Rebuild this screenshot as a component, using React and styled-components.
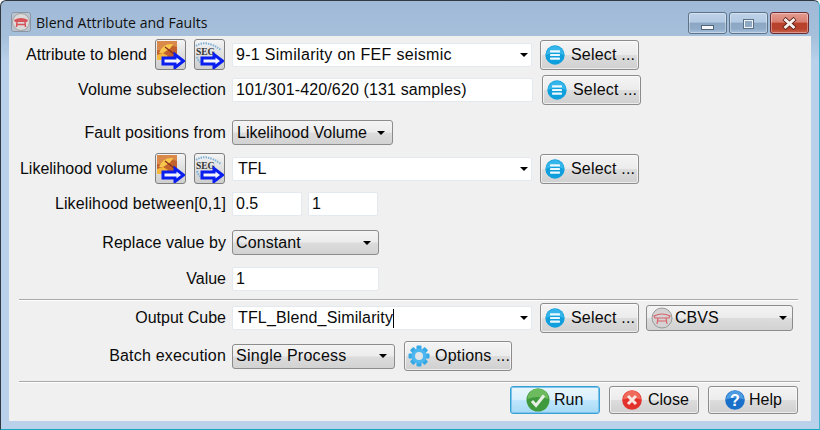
import React from 'react';
import styled, { createGlobalStyle } from 'styled-components';

const Global = createGlobalStyle`
  html, body { margin: 0; padding: 0; background: #fff; }
  body { font-family: "Liberation Sans", Arial, sans-serif; color: #000; }
`;

const Frame = styled.div`
  box-sizing: border-box;
  width: 820px;
  height: 430px;
  display: flex;
  flex-direction: column;
  background: linear-gradient(180deg, #9fb9d6 0, #a6c0dc 36px, #b9d1ea 60px, #b9d1ea 100%);
  border: 1px solid #2f3a40;
  border-bottom-color: #16a6c0;
  border-right-color: #3fb6d0;
  border-radius: 6px 6px 0 0;
  padding: 0 8px 8px;
`;

const TitleBar = styled.div`
  height: 35px;
  flex: none;
  display: flex;
  align-items: flex-start;
  padding-right: 2px;
`;

const AppIconBox = styled.div`
  width: 20px;
  height: 20px;
  margin: 11px 5px 0 2px;
`;

const Title = styled.div`
  font-family: "Open Sans", sans-serif;
  font-size: 14.1px;
  line-height: 20px;
  margin-top: 12px;
  color: #111;
  flex: 1;
`;

const WindowButton = styled.div`
  box-sizing: border-box;
  width: 39px;
  height: 22px;
  margin: 11px 0 0 ${p => p.$ml}px;
  border: 1px solid ${p => (p.$close ? '#6d2c34' : '#5d7389')};
  border-radius: 3px;
  box-shadow: inset 0 0 0 1px rgba(255, 255, 255, 0.35);
  background: ${p => (p.$close
    ? 'linear-gradient(180deg, #e39c8f 0, #d87e70 46%, #b8412a 50%, #b8432c 80%, #c9644f 100%)'
    : 'linear-gradient(180deg, #bed2e8 0, #b3cae3 46%, #8ba7c4 50%, #8fabc8 80%, #a9c3de 100%)')};
  display: flex;
  align-items: center;
  justify-content: center;
`;

const MinGlyph = styled.div`
  width: 13px;
  height: 5px;
  margin-top: 8px;
  background: #f4f6f8;
  border: 1px solid #50647a;
  box-sizing: border-box;
`;

const MaxGlyph = styled.div`
  width: 11px;
  height: 10px;
  box-sizing: border-box;
  border: 2px solid #eef3f8;
  outline: 1px solid #5a6e84;
  outline-offset: -1px;
  background: #8ea8c4;
  margin-top: 1px;
`;

const Client = styled.div`
  flex: 1;
  display: flex;
  flex-direction: column;
  background: #f0f0f0;
  padding: 3px 12px 0 0;
`;

const Row = styled.div`
  display: flex;
  align-items: center;
  flex: none;
  height: ${p => p.$h}px;
  margin-top: ${p => p.$top || 0}px;
`;

const Label = styled.div`
  width: ${p => p.$w || 217}px;
  margin-right: ${p => p.$mr || 6}px;
  flex: none;
  text-align: right;
  white-space: nowrap;
  font-size: 16px;
  line-height: 20px;
  color: #0a0a0a;
  letter-spacing: ${p => p.$ls || 0}px;
`;

const Field = styled.div`
  box-sizing: border-box;
  width: ${p => p.$w}px;
  margin-left: ${p => p.$ml || 0}px;
  height: 24px;
  flex: none;
  display: flex;
  align-items: center;
  padding: 0 3px 0 ${p => p.$pl || 3}px;
  background: #fff;
  border: 1px solid #e3e9ef;
  border-radius: 2px;
  font-size: 16px;
  color: #0a0a0a;
  white-space: nowrap;
  letter-spacing: ${p => p.$ls || 0}px;
`;

const Caret = styled.span`
  display: inline-block;
  width: 1px;
  height: 19px;
  background: #000;
`;

const ArrowDown = styled.span`
  width: 0;
  height: 0;
  border-left: 4px solid transparent;
  border-right: 4px solid transparent;
  border-top: 4px solid #000;
  margin-left: auto;
`;

const Dropdown = styled.div`
  box-sizing: border-box;
  width: ${p => p.$w}px;
  height: ${p => p.$h || 25}px;
  margin-left: ${p => p.$ml || 0}px;
  flex: none;
  display: flex;
  align-items: center;
  padding: 0 ${p => p.$pr || 7}px 0 ${p => p.$pl || 4}px;
  border: 1px solid #8c8c8c;
  border-radius: 3px;
  background: linear-gradient(180deg, #f4f4f4 0, #ececec 48%, #dcdcdc 52%, #d2d2d2 100%);
  font-size: 16px;
  color: #0a0a0a;
  white-space: nowrap;
  letter-spacing: ${p => p.$ls || 0}px;
`;

const Button = styled.div`
  box-sizing: border-box;
  width: ${p => p.$w}px;
  height: ${p => p.$h || 30}px;
  margin-left: ${p => p.$ml || 0}px;
  flex: none;
  display: flex;
  align-items: center;
  gap: ${p => p.$gap || 6}px;
  padding-left: ${p => p.$pl || 4}px;
  border: 1px solid ${p => (p.$active ? '#3aa0d8' : '#8c8c8c')};
  border-radius: 3px;
  background: ${p => (p.$active
    ? 'linear-gradient(180deg, #eaf6fd 0, #d9f0fc 48%, #bee6fd 52%, #a7d9f5 100%)'
    : 'linear-gradient(180deg, #f4f4f4 0, #ececec 48%, #dcdcdc 52%, #d0d0d0 100%)')};
  box-shadow: ${p => (p.$active ? '0 0 0 1px #7cc4ea inset' : 'inset 0 0 0 1px rgba(255,255,255,0.6)')};
  font-size: 16px;
  color: #0a0a0a;
  white-space: nowrap;
  letter-spacing: ${p => p.$ls || 0}px;
`;

const IconButton = styled.div`
  box-sizing: border-box;
  width: 31px;
  height: 31px;
  margin-left: ${p => p.$ml || 0}px;
  flex: none;
  border: 1px solid #7f7f7f;
  border-radius: 3px;
  background: linear-gradient(180deg, #f4f4f4 0, #dfdfdf 50%, #cfcfcf 100%);
  display: flex;
`;

const Separator = styled.div`
  height: 1px;
  flex: none;
  margin: ${p => p.$top}px 0 0 10px;
  width: ${p => p.$w}px;
  background: #a9a9a9;
  box-shadow: 0 1px 0 #fff;
`;

const Footer = styled.div`
  display: flex;
  flex: none;
  height: 29px;
  margin-top: 4px;
  padding-left: 501px;
  gap: 9px;
`;

const RoundIcon = styled.svg`
  margin-right: 2px;
`;

const AppIcon = () => (
  <svg width="20" height="20" viewBox="0 0 20 20">
    <rect x="0.5" y="0.5" width="19" height="19" rx="2" fill="#b9c4d0" stroke="#8a96a4" />
    <circle cx="10" cy="10" r="8.5" fill="#dcd9d9" stroke="#a4a4a4" />
    <path d="M3 8 Q10 4 17 8 L16 10 L4 10 Z" fill="#d8525a" />
    <path d="M6 10 L5.5 15 M14 10 L14.5 15 M5 12.5 H15" stroke="#d8525a" strokeWidth="1.5" fill="none" />
  </svg>
);

const BlueArrow = () => (
  <path d="M7 18 H19 V14.5 L27.5 21 L19 27.5 V24 H7 Z" fill="#f4f6ff" stroke="#0a1ef0" strokeWidth="3" strokeLinejoin="miter" />
);

const AttrIcon = () => (
  <svg width="29" height="29" viewBox="0 0 29 29">
    <rect x="1" y="1" width="20" height="19" fill="#c2622c" />
    <path d="M1 1 H21 V7 L13 5 L6 11 L1 10 Z" fill="#d98a4a" />
    <path d="M3 13 Q7 3 17 4 Q15 9 10 11 Q7 14 3 13 Z" fill="#f8c84e" />
    <path d="M1 20 V15 L7 13 L12 16 L8 20 Z" fill="#f6b83c" />
    <path d="M9 7 L18 14" stroke="#8a2f1e" strokeWidth="1.4" />
    <BlueArrow />
  </svg>
);

const SegIcon = () => (
  <svg width="29" height="29" viewBox="0 0 29 29">
    <path d="M1 6 Q11 -1 26 10" stroke="#7fb2d8" strokeWidth="2" strokeDasharray="1.5 1" fill="none" />
    <path d="M2 17 Q3 21 6 23" stroke="#7fb2d8" strokeWidth="2" strokeDasharray="1.5 1" fill="none" />
    <text x="1" y="15" fontFamily="'Liberation Serif', serif" fontWeight="700" fontSize="9.5" fill="#333" textLength="19" lengthAdjust="spacingAndGlyphs">SEG</text>
    <BlueArrow />
  </svg>
);

const SelectIcon = () => (
  <svg width="20" height="20" viewBox="0 0 18 18">
    <circle cx="9" cy="9" r="8.7" fill="#0f9fdd" />
    <path d="M1 9 A8 8 0 0 1 17 9 Q9 5 1 9 Z" fill="#35b6ea" />
    <rect x="4.5" y="4.8" width="9" height="2" rx="0.6" fill="#eaf7fd" />
    <rect x="4.5" y="8" width="9" height="2" rx="0.6" fill="#eaf7fd" />
    <rect x="4.5" y="11.2" width="9" height="2" rx="0.6" fill="#eaf7fd" />
  </svg>
);

const GearIcon = () => (
  <svg width="22" height="22" viewBox="0 0 22 22">
    <g fill="#35a8e6">
      {[0, 45, 90, 135, 180, 225, 270, 315].map(a => (
        <rect key={a} x="8.5" y="0.5" width="5" height="5" rx="1" transform={`rotate(${a} 11 11)`} />
      ))}
    </g>
    <circle cx="11" cy="11" r="7.6" fill="#4db6ee" />
    <circle cx="11" cy="11" r="4" fill="#dfe6ea" />
  </svg>
);

const CheckIcon = () => (
  <svg width="24" height="24" viewBox="0 0 24 24">
    <circle cx="12" cy="12" r="11.5" fill="#3f9a3e" />
    <path d="M1.5 11 A10.5 10.5 0 0 1 22.5 11 Q12 7 1.5 11 Z" fill="#6dbb5f" />
    <path d="M6 13 L10 17.5 L18 7.5" stroke="#e8efe6" strokeWidth="3" fill="none" />
  </svg>
);

const CrossIcon = () => (
  <svg width="20" height="20" viewBox="0 0 20 20">
    <circle cx="10" cy="10" r="9.8" fill="#e3312c" />
    <path d="M1 9.5 A9 9 0 0 1 19 9.5 Q10 6 1 9.5 Z" fill="#f06a5c" />
    <path d="M6 6 L14 14 M14 6 L6 14" stroke="#f8e6e0" strokeWidth="3" />
  </svg>
);

const HelpIcon = () => (
  <svg width="20" height="20" viewBox="0 0 20 20">
    <circle cx="10" cy="10" r="9.8" fill="#1a6fc8" />
    <path d="M1 9.5 A9 9 0 0 1 19 9.5 Q10 6 1 9.5 Z" fill="#4c9be0" />
    <text x="10" y="16" textAnchor="middle" fontFamily="'Liberation Sans', sans-serif" fontWeight="700" fontSize="16" fill="#fff">?</text>
  </svg>
);

const FormatIcon = () => (
  <RoundIcon width="22" height="22" viewBox="0 0 22 22">
    <circle cx="11" cy="11" r="10" fill="#d4d2d2" stroke="#9a9a9a" />
    <path d="M3 9 Q11 5 19 9 L18 11 L4 11 Z" fill="none" stroke="#d8626a" strokeWidth="1.2" />
    <path d="M7 11 L6 17 M15 11 L16 17 M6 14 H16" stroke="#d8626a" strokeWidth="1.2" fill="none" />
  </RoundIcon>
);

const SelectButton = ({ ml }) => (
  <Button $w={99} $ml={ml} $pl={4} $gap={6} $ls={0.2}>
    <SelectIcon />
    <span>Select ...</span>
  </Button>
);

const InputPickers = () => (
  <>
    <IconButton><AttrIcon /></IconButton>
    <IconButton $ml={8}><SegIcon /></IconButton>
  </>
);

const App = () => (
  <>
    <Global />
    <Frame>
      <TitleBar>
        <AppIconBox><AppIcon /></AppIconBox>
        <Title>Blend Attribute and Faults</Title>
        <WindowButton $ml={0}><MinGlyph /></WindowButton>
        <WindowButton $ml={2}><MaxGlyph /></WindowButton>
        <WindowButton $ml={2} $close>
          <svg width="15" height="13" viewBox="0 0 15 13">
            <path d="M2 1.5 L13 11.5 M13 1.5 L2 11.5" stroke="#5a1a14" strokeWidth="4.4" />
            <path d="M2.5 2 L12.5 11 M12.5 2 L2.5 11" stroke="#f6f1ee" strokeWidth="3" />
          </svg>
        </WindowButton>
      </TitleBar>
      <Client>
        <Row $h={31}>
          <Label $w={138} $mr={8}>Attribute to blend</Label>
          <InputPickers />
          <Field $w={300} $ml={7} $ls={0.3}>9-1 Similarity on FEF seismic<ArrowDown /></Field>
          <SelectButton ml={8} />
        </Row>
        <Row $h={30} $top={5}>
          <Label $ls={0.06}>Volume subselection</Label>
          <Field $w={301} $ls={0.13}>101/301-420/620 (131 samples)</Field>
          <SelectButton ml={9} />
        </Row>
        <Row $h={25} $top={15}>
          <Label $ls={0.1}>Fault positions from</Label>
          <Dropdown $w={161}>Likelihood Volume<ArrowDown /></Dropdown>
        </Row>
        <Row $h={31} $top={8}>
          <Label $w={139} $mr={7}>Likelihood volume</Label>
          <InputPickers />
          <Field $w={300} $ml={7} $pl={5}>TFL<ArrowDown /></Field>
          <SelectButton ml={8} />
        </Row>
        <Row $h={24} $top={8}>
          <Label $ls={0.13}>Likelihood between[0,1]</Label>
          <Field $w={70}>0.5</Field>
          <Field $w={70} $ml={6}>1</Field>
        </Row>
        <Row $h={25} $top={14}>
          <Label $ls={0.06}>Replace value by</Label>
          <Dropdown $w={147} $pl={3} $ls={0.1}>Constant<ArrowDown /></Dropdown>
        </Row>
        <Row $h={24} $top={12}>
          <Label>Value</Label>
          <Field $w={147}>1</Field>
        </Row>
        <Separator $top={8} $w={779} />
        <Row $h={30} $top={3}>
          <Label>Output Cube</Label>
          <Field $w={300} $pl={5} $ls={0.15}>TFL_Blend_Similarity<Caret /><ArrowDown /></Field>
          <SelectButton ml={8} />
          <Dropdown $w={147} $h={26} $ml={7} $pl={4} $pr={5}>
            <FormatIcon />
            CBVS
            <ArrowDown />
          </Dropdown>
        </Row>
        <Row $h={30} $top={8}>
          <Label $ls={0.2}>Batch execution</Label>
          <Dropdown $w={163} $pl={3} $ls={0.28}>Single Process<ArrowDown /></Dropdown>
          <Button $w={108} $ml={9} $pl={3} $gap={5} $ls={0.2}>
            <GearIcon />
            <span>Options ...</span>
          </Button>
        </Row>
        <Separator $top={10} $w={781} />
        <Footer>
          <Button $w={90} $h={28} $active $pl={15} $gap={4}><CheckIcon /><span>Run</span></Button>
          <Button $w={90} $h={28} $pl={12} $gap={6}><CrossIcon /><span>Close</span></Button>
          <Button $w={90} $h={28} $pl={16} $gap={4}><HelpIcon /><span>Help</span></Button>
        </Footer>
      </Client>
    </Frame>
  </>
);

export default App;
